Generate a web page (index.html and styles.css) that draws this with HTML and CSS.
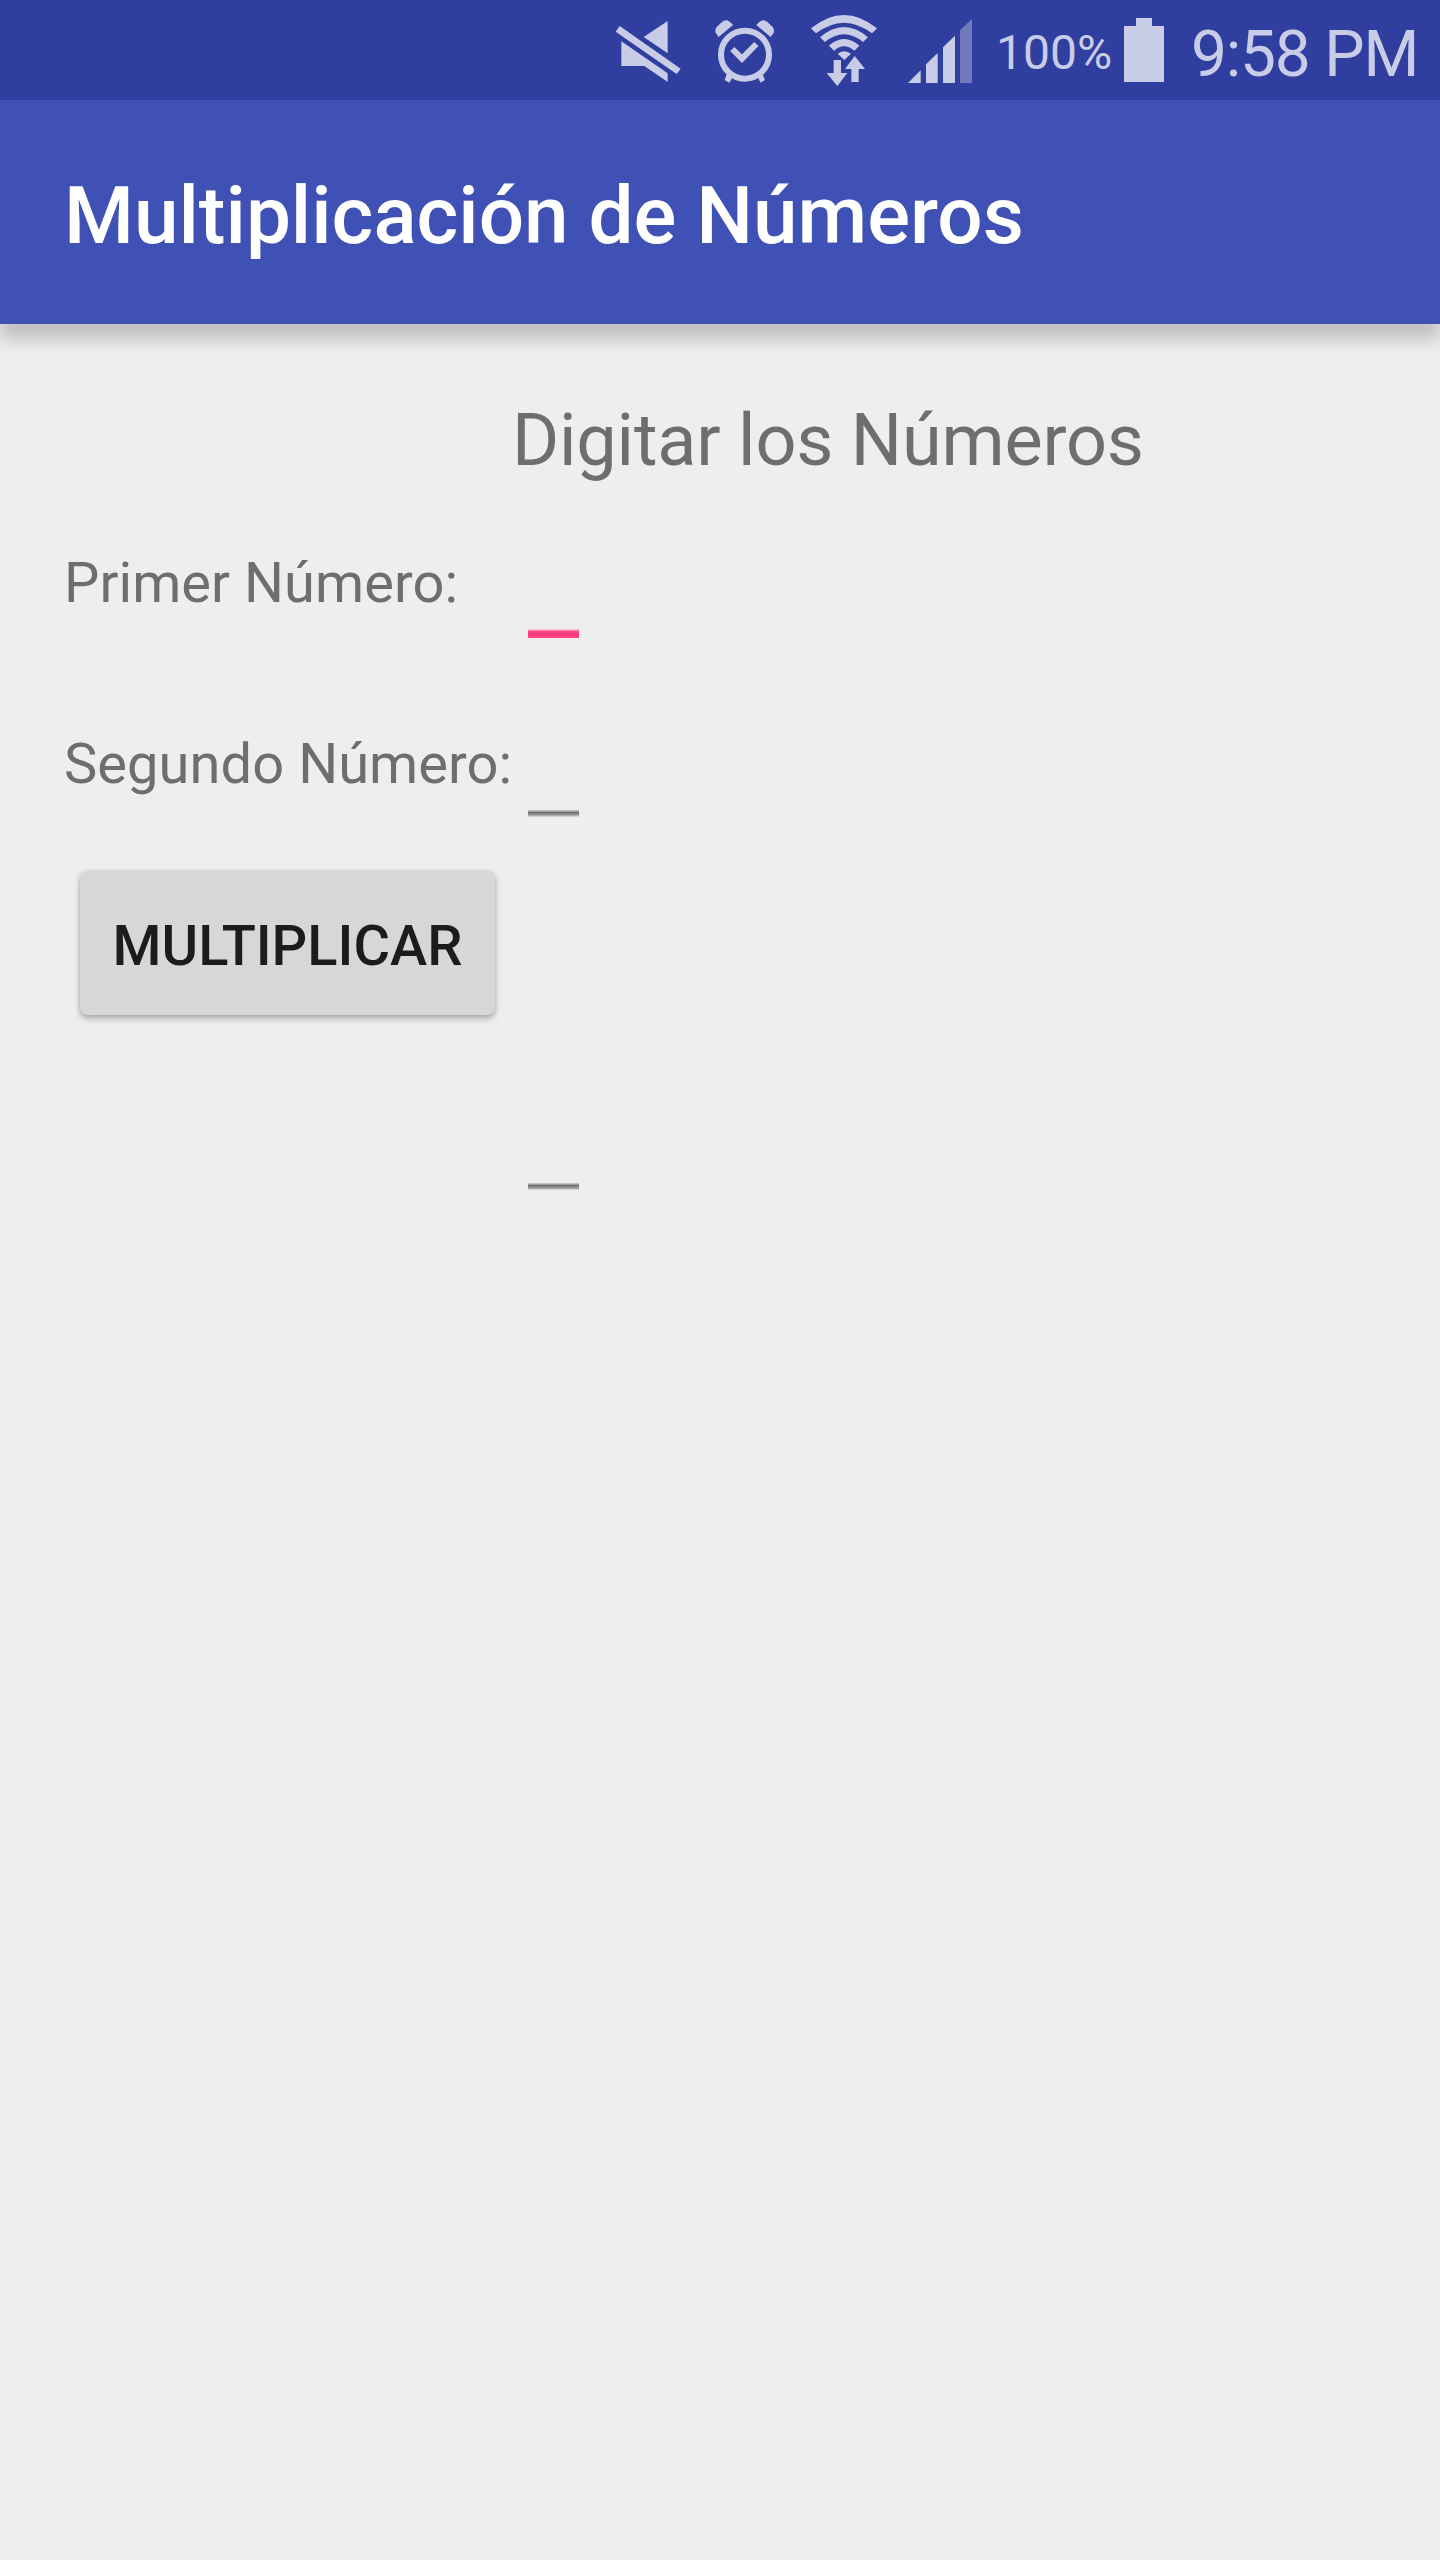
FILE: index.html
```html
<!DOCTYPE html>
<html lang="es">
<head>
<meta charset="utf-8">
<title>Multiplicación de Números</title>
<link rel="stylesheet" href="styles.css">
</head>
<body>
<div class="status">
  <svg class="icon-mute" viewBox="0 0 300 300"><path d="M203 63V160L131 111ZM64 124L203 220V246L133 198H64ZM59 78L242 206L230 222L47 95Z"/></svg>
  <svg class="icon-alarm" viewBox="300 0 270 300">
    <circle class="ring" cx="435" cy="164" r="72"/>
    <path class="ring" d="M397 147L426 176L469 132"/>
    <path d="M356 111L399 75Q381 52 366 66L350 81Q344 88 347 98ZM512 111L469 75Q487 52 502 66L518 81Q524 88 521 98ZM380 223L400 229L388 248L374 240ZM488 223L472 229L482 248L495 240Z"/>
  </svg>
  <svg class="icon-wifi" viewBox="0 0 300 300">
    <path d="M63 85Q162 5 261 85L246 100Q162 36 78 100ZM90 112Q162 50 234 112L219 126Q162 80 105 126ZM117 137Q162 97 208 137L193 152Q162 126 132 152ZM143 161Q162 146 183 161L163 180ZM131 180H153V219H172L142 258L110 219H131ZM184 246V207H165L194 168L225 207H206V246Z"/>
  </svg>
  <svg class="icon-signal" viewBox="300 0 270 300">
    <path d="M354 249L392 211V249ZM408 249V193L443 159V249ZM459 249V142L495 107V249Z"/>
    <path class="dim" d="M510 249V91L546 56V249Z"/>
  </svg>
  <span class="percent">100%</span>
  <span class="battery"></span>
  <span class="clock">9:58 PM</span>
</div>
<header class="appbar"><h1>Multiplicación de Números</h1></header>
<main class="form">
  <h2 class="heading">Digitar los Números</h2>
  <label class="label" for="n1">Primer Número:</label>
  <input class="field focused" id="n1">
  <label class="label" for="n2">Segundo Número:</label>
  <input class="field" id="n2">
  <button class="button">MULTIPLICAR</button>
  <input class="field result" aria-label="Resultado">
</main>
</body>
</html>
```
FILE: styles.css
```css
* { box-sizing: border-box; }
body {
  margin: 0;
  min-height: 2560px;
  background: #eeeeee;
  color: #6e6e6e;
  font-family: Roboto, "Liberation Sans", sans-serif;
}
.status {
  display: flex;
  height: 100px;
  padding-left: 600px;
  background: #303f9f;
  color: #c9cce7;
  white-space: nowrap;
}
.status svg { flex: none; width: 100px; height: 100px; fill: #c9cce7; }
.status .icon-alarm, .status .icon-signal { width: 90px; }
.status .ring { fill: none; stroke: #c9cce7; stroke-width: 18; }
.status .dim { fill: #7079bc; }
.percent { width: 144px; padding-left: 16px; font-size: 48px; line-height: 105px; }
.battery {
  width: 40px;
  height: 64px;
  margin-top: 18px;
  background: #c9cce7;
  clip-path: polygon(0 8px, 12px 8px, 12px 0, 28px 0, 28px 8px, 100% 8px, 100% 100%, 0 100%);
}
.clock { padding-left: 27px; font-size: 64px; line-height: 110px; letter-spacing: -1.2px; }
.appbar {
  height: 224px;
  padding: 8px 64px 0;
  background: #3f51b5;
  box-shadow: 0 16px 16px rgba(0, 0, 0, .19);
}
.appbar h1 { margin: 0; color: #fff; font-size: 80px; font-weight: 500; line-height: 217px; }
.form {
  display: grid;
  grid-template-columns: 448px 1fr;
  grid-template-rows: 216px 181px 133px 384px;
  padding-left: 64px;
}
.heading { grid-column: 2; margin: 0; padding-top: 75px; font-size: 72px; font-weight: 400; line-height: 84px; letter-spacing: -.2px; }
.label { padding-top: 10px; font-size: 56px; line-height: 66px; letter-spacing: .07px; white-space: nowrap; }
.field {
  align-self: start;
  width: 51px;
  height: 96px;
  margin-left: 16px;
  padding: 0;
  border: 0;
  outline: 0;
  background: linear-gradient(#c0c0c0 1px, #9e9e9e 1px 2px, #6e6e6e 2px 3px, #858585 3px 4px, #929292 4px 5px, #b0b0b0 5px 6px, #d2d2d2 6px) bottom / 100% 7px no-repeat;
}
.field.focused {
  height: 98px;
  background: linear-gradient(#edc1cf 1px, #f793b3 1px 2px, #ff4081 2px) bottom / 100% 9px no-repeat;
}
.button {
  align-self: start;
  width: 415px;
  height: 144px;
  margin: 17px 0 0 16px;
  padding: 5px 0 0;
  border: 0;
  border-radius: 8px;
  background: #d6d7d7;
  box-shadow: 0 4px 6px rgba(0, 0, 0, .25), 0 0 4px rgba(0, 0, 0, .12);
  color: #1c1c1c;
  font: 500 56px/66px Roboto, "Liberation Sans", sans-serif;
}
.field.result { height: 336px; }
```
